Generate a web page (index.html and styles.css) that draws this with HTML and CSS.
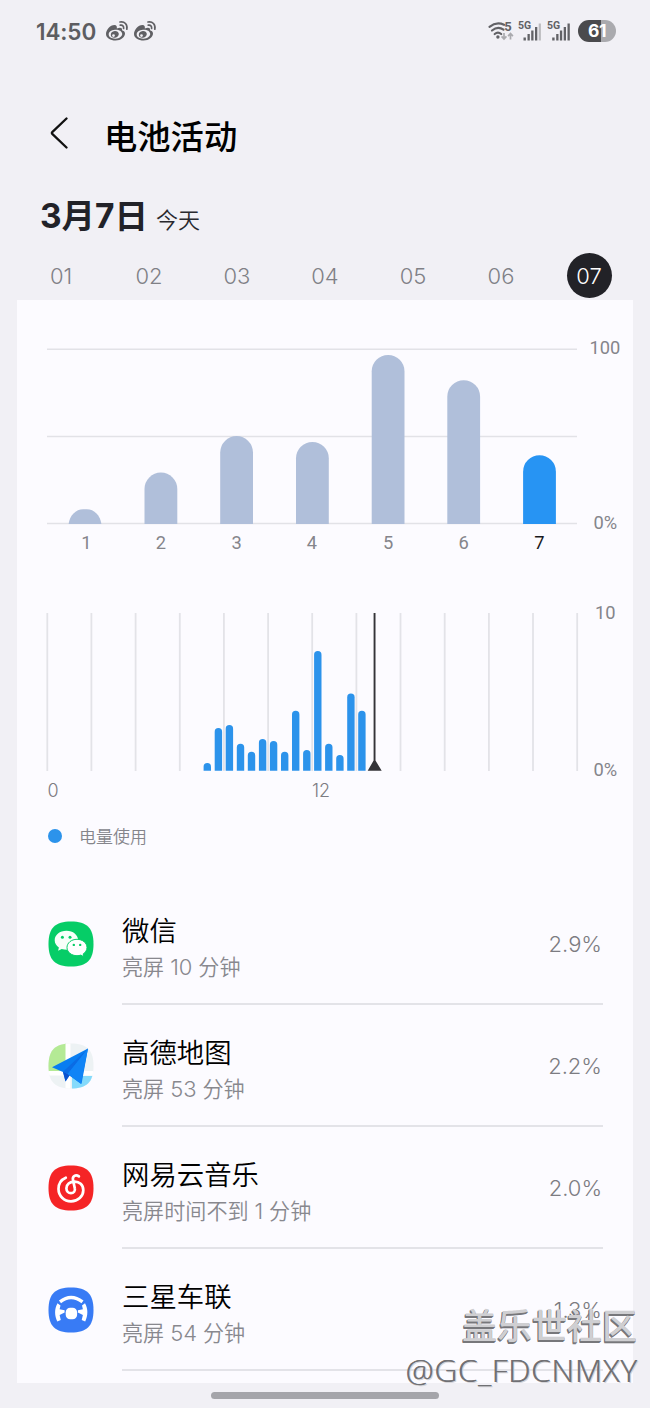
FILE: index.html
```html
<!DOCTYPE html>
<html lang="zh-CN">
<head>
<meta charset="utf-8">
<title>电池活动</title>
<link rel="stylesheet" href="styles.css">
</head>
<body>
<svg class="defs" aria-hidden="true">
  <symbol id="weibo" viewBox="0 0 24 22">
    <path fill="#606064" fill-rule="evenodd" d="M9.500 5C5 5 1 10 1 14c0 4 4.500 6.500 9.500 6.500 5.500 0 9.500-3.500 9.500-7 0-2-1.500-2.900-3-3.300 .6-2-1-3.300-5.200-1.800C12.200 6.500 11.500 5 9.500 5ZM10 9.700c3.900-.3 7 1.400 7.200 4 .2 2.500-2.700 4.700-6.500 5-3.800.2-6.900-1.500-7-4.100-.2-2.500 2.500-4.600 6.300-4.900Z"/>
    <path fill="#606064" fill-rule="evenodd" d="M9.800 11c-2.600.2-4.200 2-4 4 .1 1.900 2 3 4.300 2.700 2.300-.3 3.900-2 3.700-3.900-.2-1.800-1.800-2.900-4-2.800ZM8.500 14.200a1.400 1.400 0 1 1 0 2.800 1.400 1.400 0 0 1 0-2.800Z"/>
    <path fill="none" stroke="#606064" stroke-width="1.700" stroke-linecap="round" d="M15 2c4.500-1 7.800 2.700 6.800 7.200M15.300 5.200c2.200-.5 3.700 1 3.300 3.300"/>
  </symbol>
</svg>

<header class="status">
  <div class="status-left">
    <span class="clock">14:50</span>
    <svg class="weibo" width="24" height="22"><use href="#weibo"/></svg>
    <svg class="weibo" width="24" height="22"><use href="#weibo"/></svg>
  </div>
  <div class="status-right">
    <svg class="signals" width="92" height="26" viewBox="0 0 92 26">
      <g fill="none" stroke="#626266" stroke-width="2.200" stroke-linecap="round">
        <path d="M2.500 8.800q7-5.500 14.500-2M5 12.500q6-4.800 11.500-.8M7.700 16q3.300-2.600 6.500 0"/>
      </g>
      <circle cx="10.900" cy="19" r="1.700" fill="#626266"/>
      <text x="17.300" y="12.500" class="net-five">5</text>
      <path d="M17 15v6m-2.400-2.600 2.400 2.600 2.400-2.600M23.500 21.500V15.500m-2.400 2.600 2.400-2.600 2.400 2.600" fill="none" stroke="#aaaaae" stroke-width="1.700"/>
      <text x="31" y="10.500" class="net-tag">5G</text>
      <text x="60" y="10.500" class="net-tag">5G</text>
      <g fill="#626266">
        <path d="M36.500 19.500h2.400v3h-2.400zM40.500 16h2.300v6.500h-2.300zM44.200 12.500h2.300v10h-2.300zM48 9h2.300v13.500H48z"/>
        <path fill="#bbbbbf" d="M51.700 5.500h2.200v17h-2.200z"/>
        <path d="M65.200 19.500h2.400v3h-2.400zM69.200 16h2.300v6.500h-2.300zM72.900 12.500h2.300v10h-2.300zM76.700 9h2.300v13.500h-2.300zM80.500 5.500h2.300v17h-2.300z"/>
      </g>
    </svg>
    <span class="battery">61</span>
  </div>
</header>

<div class="titlebar">
  <svg class="back" width="20" height="34" viewBox="0 0 20 34"><path d="M18.500 2.500 4.500 15.800q-1.200 1.200 0 2.400l14 13.300" fill="none" stroke="#111" stroke-width="2.300" stroke-linecap="round" stroke-linejoin="round"/></svg>
  <h1 class="title">电池活动</h1>
</div>

<div class="date"><strong class="date-main">3月7日</strong><span class="date-sub">今天</span></div>

<nav class="days">
  <span class="day">01</span><span class="day">02</span><span class="day">03</span><span class="day">04</span><span class="day">05</span><span class="day">06</span><span class="day day-on">07</span>
</nav>

<main class="card">
  <svg class="chart" width="616" height="516" viewBox="17 300 616 516">
    <path class="grid" d="M47 349.200h530M47 436.500h530M47 523.500h530"/>
    <g class="bar">
      <path d="M68.700 524v-.5c1-8 7-14.300 14.500-14.300h3.600c7.500 0 13.500 6.300 14.500 14.300v.5z"/>
      <path d="M144.500 524v-35a16.400 16.400 0 0 1 32.800 0v35z"/>
      <path d="M220.200 524v-71.500a16.400 16.400 0 0 1 32.800 0V524z"/>
      <path d="M296 524v-65.700a16.400 16.400 0 0 1 32.800 0V524z"/>
      <path d="M371.700 524V371.300a16.400 16.400 0 0 1 32.800 0V524z"/>
      <path d="M447.300 524V396.600a16.400 16.400 0 0 1 32.800 0V524z"/>
      <path class="bar-on" d="M523.100 524v-52.300a16.400 16.400 0 0 1 32.800 0V524z"/>
    </g>
    <g class="axis axis-mid">
      <text x="86.500" y="549">1</text><text x="161" y="549">2</text><text x="236.700" y="549">3</text><text x="312" y="549">4</text><text x="388.200" y="549">5</text><text x="463.700" y="549">6</text><text class="axis-on" x="539.500" y="549">7</text>
    </g>
    <g class="axis">
      <text x="589.500" y="354">100</text><text x="593.500" y="528.500">0%</text>
      <text x="595" y="618.500">10</text><text x="593.500" y="776">0%</text>
    </g>
    <path class="grid-v" d="M47.300 613v158M91.400 613v158M135.600 613v158M179.800 613v158M223.900 613v158M268.100 613v158M312.200 613v158M356.400 613v158M400.500 613v158M444.700 613v158M488.900 613v158M533 613v158M577.200 613v158"/>
    <g class="hours">
      <path d="M203.600 770.800v-4.100a3.700 3.700 0 0 1 7.400 0v4.100z"/>
      <path d="M214.700 770.800v-39a3.700 3.700 0 0 1 7.400 0v39z"/>
      <path d="M225.700 770.800v-42a3.700 3.700 0 0 1 7.400 0v42z"/>
      <path d="M236.800 770.800v-23.300a3.700 3.700 0 0 1 7.400 0v23.300z"/>
      <path d="M247.800 770.800v-15.300a3.700 3.700 0 0 1 7.400 0v15.300z"/>
      <path d="M258.900 770.800v-28a3.700 3.700 0 0 1 7.400 0v28z"/>
      <path d="M269.900 770.800v-26a3.700 3.700 0 0 1 7.400 0v26z"/>
      <path d="M281 770.800v-15.300a3.700 3.700 0 0 1 7.400 0v15.300z"/>
      <path d="M292 770.800v-56.300a3.700 3.700 0 0 1 7.400 0v56.300z"/>
      <path d="M303.100 770.800v-17a3.700 3.700 0 0 1 7.400 0v17z"/>
      <path d="M314.100 770.800v-116a3.700 3.700 0 0 1 7.400 0v116z"/>
      <path d="M325.100 770.800v-23.300a3.700 3.700 0 0 1 7.400 0v23.300z"/>
      <path d="M336.200 770.800v-12.100a3.700 3.700 0 0 1 7.400 0v12.100z"/>
      <path d="M347.200 770.800v-73.500a3.700 3.700 0 0 1 7.400 0v73.500z"/>
      <path d="M358.200 770.800v-56.300a3.700 3.700 0 0 1 7.400 0v56.300z"/>
    </g>
    <path class="now" d="M373.600 613h1.900v147.500l6.200 10.300h-14l5.900-10.300z"/>
    <g class="axis axis-hour"><text x="47.500" y="797">0</text><text x="312" y="797">12</text></g>
  </svg>

  <div class="legend"><i class="dot"></i>电量使用</div>

  <ul class="apps">
    <li class="app">
      <svg class="icon" width="46" height="46" viewBox="0 0 46 46">
        <path fill="#06cd67" d="M23 .5C39 .5 45.500 7 45.500 23S39 45.500 23 45.500.5 39 .5 23 7 .5 23 .5Z"/>
        <path fill="#f7fff9" d="M18.500 9.800c-6.800 0-11.800 4.200-11.800 9.500 0 3 1.600 5.500 4.200 7.300l-.8 3.200 3.600-1.900c2 .6 3.800.9 6.200.8 10 0 10.500-6 10.300-9.400-.3-5.300-5-9.500-11.700-9.500Z"/>
        <path fill="#fff" stroke="#06cd67" stroke-width="1" d="M29 18.300c-5.600 0-10 3.600-10 8.200s4.400 8.200 10 8.200c1.400 0 2.700-.2 3.900-.6l3 1.700-.7-2.900c2.400-1.500 3.800-3.800 3.800-6.400 0-4.600-4.400-8.200-10-8.200Z"/>
        <g fill="#06cd67"><circle cx="14.400" cy="16.300" r="1.500"/><circle cx="22" cy="16.300" r="1.500"/><circle cx="25.800" cy="23.900" r="1.200"/><circle cx="32.200" cy="23.900" r="1.200"/></g>
      </svg>
      <div class="info"><b class="name">微信</b><span class="use">亮屏 <span class="num">10</span> 分钟</span></div><span class="pct">2.9%</span>
    </li>
    <li class="app">
      <svg class="icon" width="46" height="46" viewBox="0 0 46 46">
        <clipPath id="mapclip"><path d="M23 .5C39 .5 45.500 7 45.500 23S39 45.500 23 45.500.5 39 .5 23 7 .5 23 .5Z"/></clipPath>
        <g clip-path="url(#mapclip)">
          <path fill="#edf2f4" d="M0 0h46v46H0z"/><path fill="#b4ea95" d="M0 0h18v28H0z"/><path fill="#84dafb" d="M24 33h22v13H24z"/><path fill="#fff" d="M17.500 0h5v46h-5zM0 28h46v4.500H0z"/>
        </g>
        <path fill="#087df1" d="M40 5.500 4 24.300l11 4.700 2.500 9.500 4-6 11.200 8.200q1 .3 1-.8z"/>
        <path fill="#0a51ce" d="m19.600 31-4.600-2.200 2.500 9.700 4-6z"/>
        <path fill="#0b6ce4" d="M40 5.500 15 28.800l4.600 2.200z"/>
        <path fill="#1084f6" d="M40 5.500 19.600 31l13.300 9.400z"/>
      </svg>
      <div class="info"><b class="name">高德地图</b><span class="use">亮屏 <span class="num">53</span> 分钟</span></div><span class="pct">2.2%</span>
    </li>
    <li class="app">
      <svg class="icon" width="46" height="46" viewBox="0 0 46 46">
        <path fill="#f52426" d="M23 .5C39 .5 45.500 7 45.500 23S39 45.500 23 45.500.5 39 .5 23 7 .5 23 .5Z"/>
        <path fill="none" stroke="#fff" stroke-width="2.700" stroke-linecap="round" d="M17.800 12.700C13.200 14.600 10.500 19 10.500 24c0 6.900 5.500 12.300 12.500 12.300S35.300 31.200 35.300 25.200c0-5.400-4-8.700-8.900-8.600-4.700.1-8 2.900-8 6.600 0 3 2.100 5 4.500 5 2.800 0 4.600-2.200 3.900-4.900l-1.800-8.300c-.9-4 2.800-6 5.900-3.600"/>
      </svg>
      <div class="info"><b class="name">网易云音乐</b><span class="use">亮屏时间不到 <span class="num">1</span> 分钟</span></div><span class="pct">2.0%</span>
    </li>
    <li class="app">
      <svg class="icon" width="46" height="46" viewBox="0 0 46 46">
        <path fill="#387bf5" d="M23 .5C39 .5 45.500 7 45.500 23S39 45.500 23 45.500.5 39 .5 23 7 .5 23 .5Z"/>
        <path fill="none" stroke="#fff" stroke-width="3.400" d="M12 14.800Q23 6.200 34.500 14.800"/>
        <path fill="#fff" d="M9.500 16.200 12.500 18.500l-.9 3.700 5 1v2.300l-5 2.500 1.200 5-3.500 1.600C6.500 28.600 6.200 22 9.500 16.200ZM37 16.200 34 18.500l.9 3.700-5 1v2.300l5 2.500-1.200 5 3.500 1.600c2.800-6 3.100-12.600-.2-18.400Z"/>
        <rect x="17.700" y="20.800" width="11.400" height="11.400" rx="4.500" fill="#fff"/>
      </svg>
      <div class="info"><b class="name">三星车联</b><span class="use">亮屏 <span class="num">54</span> 分钟</span></div><span class="pct">1.3%</span>
    </li>
  </ul>
</main>
<div class="home"></div>

<div class="mark"><span class="mark-site">盖乐世社区</span><span class="mark-user">@GC_FDCNMXY</span></div>
</body>
</html>
```

FILE: styles.css
```css
* { box-sizing: border-box; }
body {
  position: relative;
  width: 650px;
  height: 1408px;
  margin: 0;
  overflow: hidden;
  background: #f1f0f5;
  color: #111;
  font-family: Inter, "Noto Sans CJK SC", sans-serif;
}
.defs { position: absolute; width: 0; height: 0; }
.status {
  display: flex;
  justify-content: space-between;
  align-items: center;
  height: 62px;
  padding: 0 34px 0 36px;
}
.status-left, .status-right { display: flex; align-items: center; }
.clock { width: 69px; font-size: 22.500px; font-weight: 600; color: #5d5d61; letter-spacing: -.1px; }
.weibo { margin-right: 4px; }
.signals { margin-right: -1px; }
.battery {
  width: 38px;
  height: 22px;
  border-radius: 11px;
  background: linear-gradient(90deg, #4a4a4d 61%, #aaaaae 61%);
  color: #fff;
  font-size: 17.500px;
  font-weight: 700;
  line-height: 22px;
  letter-spacing: -.5px;
  text-align: center;
}
.net-five { font: 700 13px Roboto, sans-serif; fill: #626266; }
.net-tag { font: 700 10.500px Roboto, sans-serif; fill: #626266; }
.titlebar { display: flex; align-items: center; height: 140px; padding: 0 48px; }
.back { margin-top: 2px; }
.title {
  margin: 6px 0 0 36px;
  font: 500 33.300px/48px "Noto Sans CJK SC", sans-serif;
  color: #000;
}
.date {
  display: flex;
  align-items: baseline;
  height: 50px;
  margin-top: -11px;
  padding-left: 40px;
  line-height: 50px;
}
.date-main { font-size: 33.500px; font-weight: 700; color: #222228; }
.date-sub { margin-left: 8px; font-size: 22px; color: #29292e; font-weight: 350; }
.days {
  display: grid;
  grid-template-columns: repeat(7, 88px);
  justify-items: center;
  align-items: center;
  height: 59px;
  padding: 9px 0 0 17px;
}
.day {
  width: 45px;
  height: 45px;
  border-radius: 50%;
  color: #808086;
  font-size: 22px;
  font-weight: 300;
  line-height: 46px;
  text-align: center;
}
.day-on { background: #222227; color: #fff; }
.card { width: 616px; height: 1083px; margin: 0 17px; background: #fcfbff; overflow: hidden; }
.chart { display: block; }
.grid { stroke: #e2e2e7; stroke-width: 1.500; fill: none; }
.grid-v { stroke: #e3e3e8; stroke-width: 1.800; fill: none; }
.bar { fill: #b0bfda; }
.bar-on { fill: #2794f3; }
.hours { fill: #2c93eb; }
.now { fill: #343438; }
.axis { font: 400 18.300px Roboto, sans-serif; fill: #85858b; }
.axis-mid { text-anchor: middle; }
.axis-on { fill: #19191d; }
.axis-hour { font: 300 18px Inter, sans-serif; fill: #7c7c82; }
.legend {
  display: flex;
  align-items: center;
  height: 40px;
  padding-left: 30.500px;
  color: #85858b;
  font: 350 17px/42px "Noto Sans CJK SC", sans-serif;
}
.dot { width: 14px; height: 14px; margin: -1px 17.500px 0 0; border-radius: 50%; background: #2c93eb; }
.apps { margin: 26px 0 0; padding: 0; list-style: none; }
.app { position: relative; display: flex; height: 122px; padding: 0 31px 0 31px; }
.app::after { content: ""; position: absolute; left: 105px; right: 30px; bottom: -1px; height: 2px; background: #e3e3e8; }
.icon { margin-top: 39px; }
.info { display: flex; flex: 1; flex-direction: column; margin: 30px 0 0 28px; }
.name { height: 38px; font-size: 27.400px; font-weight: 350; line-height: 38px; color: #000; }
.use { height: 34px; font-size: 21.100px; font-weight: 350; line-height: 34px; color: #88888e; }
.num { font-weight: 300; font-size: 22px; }
.pct { margin-top: 47px; font-size: 22px; font-weight: 300; line-height: 30px; color: #7c7c82; }
.home { width: 228px; height: 7px; margin: 9px 0 0 211px; border-radius: 4px; background: #a5a5aa; }
.mark {
  position: absolute;
  top: 1301px;
  right: 13px;
  display: flex;
  flex-direction: column;
  align-items: flex-end;
  white-space: nowrap;
}
.mark-site {
  font: 500 35px/46px "Noto Sans CJK SC", sans-serif;
  color: #cfcfd2;
  text-shadow: -1px 1px 0 #77777b, 0 1px 0 #77777b, -1px 2px 0 #77777b;
}
.mark-user {
  margin-right: -1px;
  font: 300 31.500px/46px "Open Sans", "Noto Sans", sans-serif;
  letter-spacing: .7px;
  color: #707074;
  text-shadow: 1px 1px 0 #d5d5d9, -.5px 0 0 #707074;
}
```
